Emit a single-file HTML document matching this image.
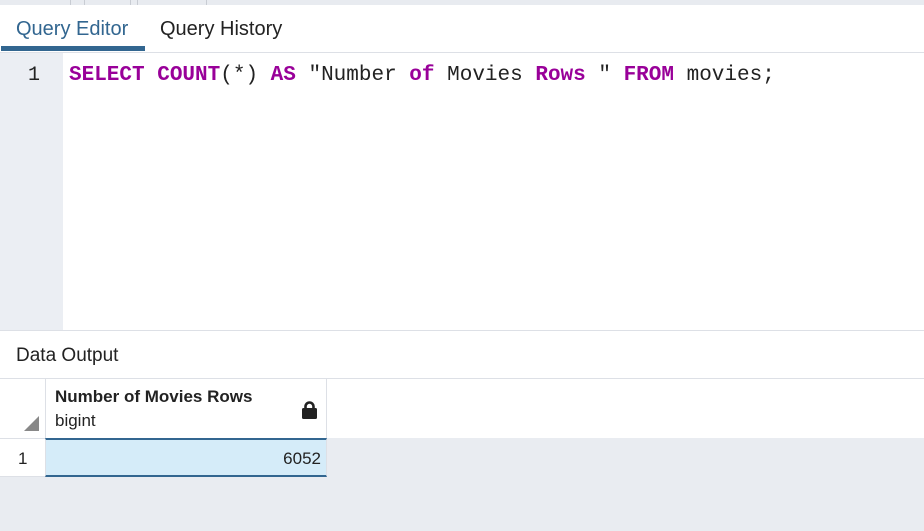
<!DOCTYPE html>
<html><head><style>
*{margin:0;padding:0;box-sizing:border-box}
body{width:924px;height:531px;overflow:hidden;background:#fff;font-family:"Liberation Sans",sans-serif;position:relative}
.a{position:absolute}
</style></head><body>
<div class="a" style="left:0;top:0;width:924px;height:5px;background:#e8ebf0"></div>
<div class="a" style="left:70px;top:0;width:1px;height:5px;background:#c8ccd3"></div>
<div class="a" style="left:84px;top:0;width:1px;height:5px;background:#c8ccd3"></div>
<div class="a" style="left:130px;top:0;width:1px;height:5px;background:#c8ccd3"></div>
<div class="a" style="left:137px;top:0;width:1px;height:5px;background:#c8ccd3"></div>
<div class="a" style="left:206px;top:0;width:1px;height:5px;background:#c8ccd3"></div>
<div class="a" style="left:16px;top:18px;font-size:20px;color:#326690">Query Editor</div>
<div class="a" style="left:160px;top:18px;font-size:20px;color:#222">Query History</div>
<div class="a" style="left:1px;top:46px;width:144px;height:5px;background:#326690"></div>
<div class="a" style="left:0;top:52px;width:924px;height:1px;background:#dde0e6"></div>
<div class="a" style="left:0;top:53px;width:63px;height:277px;background:#ebeef3"></div>
<div class="a" style="left:28px;top:64px;font:20px 'Liberation Mono',monospace;color:#222">1</div>
<div class="a" style="left:69px;top:64px;font:21px 'Liberation Mono',monospace;color:#222;white-space:pre"><b style="color:#990099">SELECT COUNT</b>(*) <b style="color:#990099">AS</b> "Number <b style="color:#990099">of</b> Movies <b style="color:#990099">Rows</b> " <b style="color:#990099">FROM</b> movies;</div>
<div class="a" style="left:0;top:330px;width:924px;height:1px;background:#dde0e6"></div>
<div class="a" style="left:16px;top:345px;font-size:19px;color:#222">Data Output</div>
<div class="a" style="left:0;top:378px;width:924px;height:1px;background:#dde0e6"></div>
<div class="a" style="left:45px;top:379px;width:1px;height:59px;background:#dde0e6"></div>
<div class="a" style="left:326px;top:379px;width:1px;height:59px;background:#dde0e6"></div>
<svg class="a" style="left:24px;top:416px" width="16" height="16"><polygon points="15,0 15,15 0,15" fill="#888"/></svg>
<div class="a" style="left:55px;top:387px;font-size:17px;font-weight:bold;color:#222">Number of Movies Rows</div>
<div class="a" style="left:55px;top:411px;font-size:17px;color:#222">bigint</div>
<svg class="a" style="left:301px;top:400px" width="17" height="19"><path d="M4.5 9V6.5a4 4 0 0 1 8 0V9" fill="none" stroke="#222" stroke-width="2.6"/><rect x="1" y="8" width="15" height="11" rx="1.5" fill="#222"/></svg>
<div class="a" style="left:0;top:438px;width:924px;height:93px;background:#e9ecf1"></div>
<div class="a" style="left:0;top:438px;width:45px;height:39px;background:#fff;border-top:1px solid #dde0e6;border-bottom:1px solid #dde0e6"></div>
<div class="a" style="left:18px;top:449px;font-size:17px;color:#222">1</div>
<div class="a" style="left:45px;top:438px;width:282px;height:39px;background:#d5ecf9;border-top:2px solid #326690;border-bottom:2px solid #326690;border-left:1px solid #dde0e6;border-right:1px solid #dde0e6"></div>
<div class="a" style="left:260px;top:449px;width:61px;text-align:right;font-size:17px;color:#222">6052</div>
</body></html>
